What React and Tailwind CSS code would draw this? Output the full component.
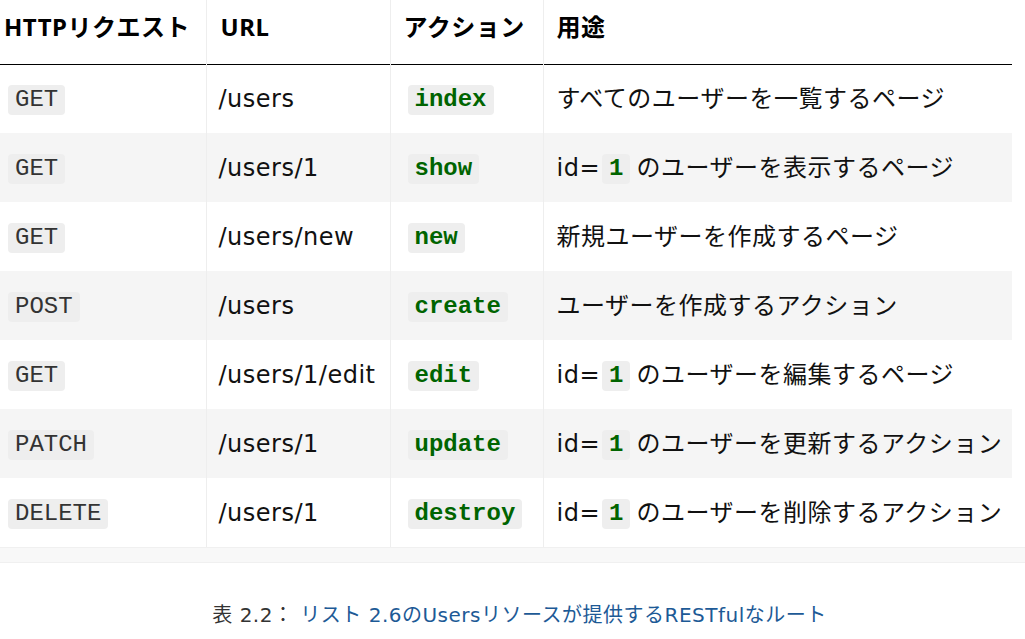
import React from 'react';

const rows = [
  { method: 'GET', url: '/users', action: 'index', desc: ['すべてのユーザーを一覧するページ'] },
  { method: 'GET', url: '/users/1', action: 'show', desc: ['id=', '1', 'のユーザーを表示するページ'] },
  { method: 'GET', url: '/users/new', action: 'new', desc: ['新規ユーザーを作成するページ'] },
  { method: 'POST', url: '/users', action: 'create', desc: ['ユーザーを作成するアクション'] },
  { method: 'GET', url: '/users/1/edit', action: 'edit', desc: ['id=', '1', 'のユーザーを編集するページ'] },
  { method: 'PATCH', url: '/users/1', action: 'update', desc: ['id=', '1', 'のユーザーを更新するアクション'] },
  { method: 'DELETE', url: '/users/1', action: 'destroy', desc: ['id=', '1', 'のユーザーを削除するアクション'] },
];

const sans = "font-['DejaVu_Sans','Noto_Sans_CJK_JP',sans-serif]";

const Code = ({ children, green, className = '' }) => (
  <code
    className={`inline-block h-[30px] px-[7px] rounded-[4px] bg-[#eeeeee] text-[24px] leading-[30px] tracking-normal font-['Liberation_Mono',monospace] align-middle ${
      green ? 'text-[#006400] font-bold' : 'text-[#333333]'
    } ${className}`}
  >
    {children}
  </code>
);

const App = () => {
  return (
    <div className={`w-[1025px] h-[639px] bg-white overflow-hidden ${sans}`}>
      <table className="w-[1012px] table-fixed border-collapse">
        <colgroup>
          <col className="w-[206px]" />
          <col className="w-[184px]" />
          <col className="w-[153px]" />
          <col className="w-[469px]" />
        </colgroup>
        <thead>
          <tr className="h-[64px] border-b border-black text-left text-[24px] font-bold text-black font-['Noto_Sans','Noto_Sans_CJK_JP',sans-serif] tracking-[0.5px]">
            <th className="pl-[4px] pb-[10px] align-middle">HTTPリクエスト</th>
            <th className="pl-[14px] pb-[10px] align-middle border-l border-[#eeeeee]">URL</th>
            <th className="pl-[13px] pb-[10px] align-middle border-l border-[#eeeeee]">アクション</th>
            <th className="pl-[13px] pb-[10px] align-middle border-l border-[#eeeeee]">用途</th>
          </tr>
        </thead>
        <tbody>
          {rows.map((r, i) => (
            <tr key={i} className={`h-[69px] text-[24px] text-[#111111] tracking-[0.5px] ${i % 2 === 1 ? 'bg-[#f5f5f5]' : 'bg-white'}`}>
              <td className="pl-[8px] align-middle">
                <Code>{r.method}</Code>
              </td>
              <td className="pl-[12px] align-middle border-l border-[#eeeeee] whitespace-nowrap">{r.url}</td>
              <td className="pl-[17px] align-middle border-l border-[#eeeeee]">
                <Code green>{r.action}</Code>
              </td>
              <td className="pl-[13px] align-middle border-l border-[#eeeeee] whitespace-nowrap">
                {r.desc.length === 1 ? (
                  r.desc[0]
                ) : (
                  <>
                    {r.desc[0]}
                    <Code green className="ml-[2px] mr-[6px]">{r.desc[1]}</Code>
                    {r.desc[2]}
                  </>
                )}
              </td>
            </tr>
          ))}
        </tbody>
      </table>

      {/* scrollbar strip */}
      <div className="h-[16px] bg-[#f8f8f8] border-t border-b border-[#f0f0f0]" />

      <p className="mt-[38px] pl-[14px] text-center text-[20px] leading-[28px] tracking-[0.5px] text-[#333333]">
        表 2.2： <span className="text-[#1d5a96]">リスト 2.6のUsersリソースが提供するRESTfulなルート</span>
      </p>
    </div>
  );
};

export default App;
